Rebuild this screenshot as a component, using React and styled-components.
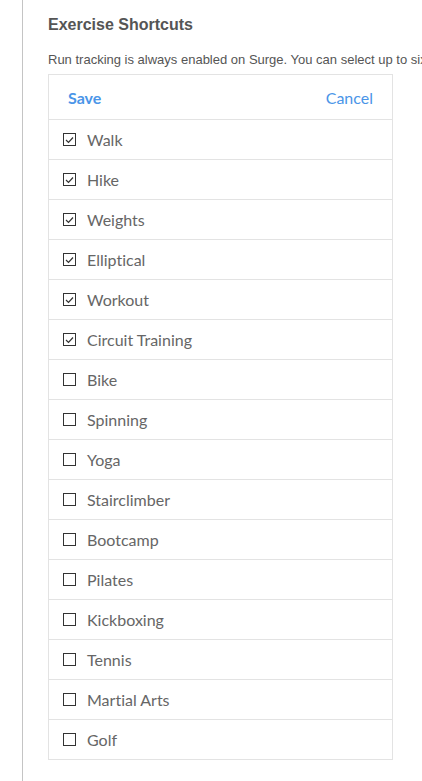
import React from "react";
import styled, { createGlobalStyle } from "styled-components";

const Global = createGlobalStyle`
  html, body { margin: 0; padding: 0; background: #fff; }
  body { font-family: "Liberation Sans", Arial, sans-serif; overflow: hidden; }
`;

const Page = styled.div`
  display: flex;
  min-height: 781px;
  overflow: hidden;
`;

const Rail = styled.div`
  width: 22px;
  flex-shrink: 0;
  border-right: 1px solid #c4c4c4;
`;

const Content = styled.div`
  padding: 15px 0 0 25px;
  flex: 1;
  min-width: 0;
  overflow: hidden;
`;

const Title = styled.h2`
  margin: 0;
  font-family: "Liberation Sans", Arial, sans-serif;
  font-size: 16px;
  font-weight: bold;
  color: #555;
  line-height: 20px;
`;

const Desc = styled.p`
  margin: 16px 0 0;
  font-size: 13px;
  color: #555;
  line-height: 17px;
  white-space: nowrap;
`;

const Box = styled.div`
  margin-top: 6px;
  width: 343px;
  border: 1px solid #e3e3e3;
`;

const Header = styled.div`
  display: flex;
  justify-content: space-between;
  align-items: center;
  height: 44px;
  padding: 0 19px 0 19px;
  border-bottom: 1px solid #e3e3e3;
`;

const Action = styled.button`
  border: 0;
  background: none;
  padding: 0;
  font-family: "Lato", "Liberation Sans", sans-serif;
  font-size: 16px;
  font-weight: ${(p) => (p.$bold ? 700 : 400)};
  color: #4a95e8;
  cursor: pointer;
`;

const Row = styled.label`
  display: flex;
  align-items: center;
  height: 39px;
  padding-left: 14px;
  border-top: 1px solid #e3e3e3;
  &:first-of-type { border-top: 0; }
`;

const Check = styled.span`
  width: 11px;
  height: 11px;
  border: 1px solid #333;
  display: flex;
  align-items: center;
  justify-content: center;
  margin-right: 11px;
  background: #fff;
`;

const Label = styled.span`
  font-family: "Lato", "Liberation Sans", sans-serif;
  font-size: 16px;
  color: #666;
  font-variant-ligatures: none;
`;

const items = [
  ["Walk", true],
  ["Hike", true],
  ["Weights", true],
  ["Elliptical", true],
  ["Workout", true],
  ["Circuit Training", true],
  ["Bike", false],
  ["Spinning", false],
  ["Yoga", false],
  ["Stairclimber", false],
  ["Bootcamp", false],
  ["Pilates", false],
  ["Kickboxing", false],
  ["Tennis", false],
  ["Martial Arts", false],
  ["Golf", false],
];

export default function App() {
  return (
    <Page>
      <Global />
      <Rail />
      <Content>
        <Title>Exercise Shortcuts</Title>
        <Desc>Run tracking is always enabled on Surge. You can select up to six exercise shortcuts to show on your tracker.</Desc>
        <Box>
          <Header>
            <Action $bold>Save</Action>
            <Action>Cancel</Action>
          </Header>
          <div>
            {items.map(([name, on]) => (
              <Row key={name}>
                <Check>
                  {on && (
                    <svg width="9" height="8" viewBox="0 0 9 8">
                      <path d="M1 4 L3.5 6.5 L8 1.5" fill="none" stroke="#333" strokeWidth="1.2" />
                    </svg>
                  )}
                </Check>
                <Label>{name}</Label>
              </Row>
            ))}
          </div>
        </Box>
      </Content>
    </Page>
  );
}
